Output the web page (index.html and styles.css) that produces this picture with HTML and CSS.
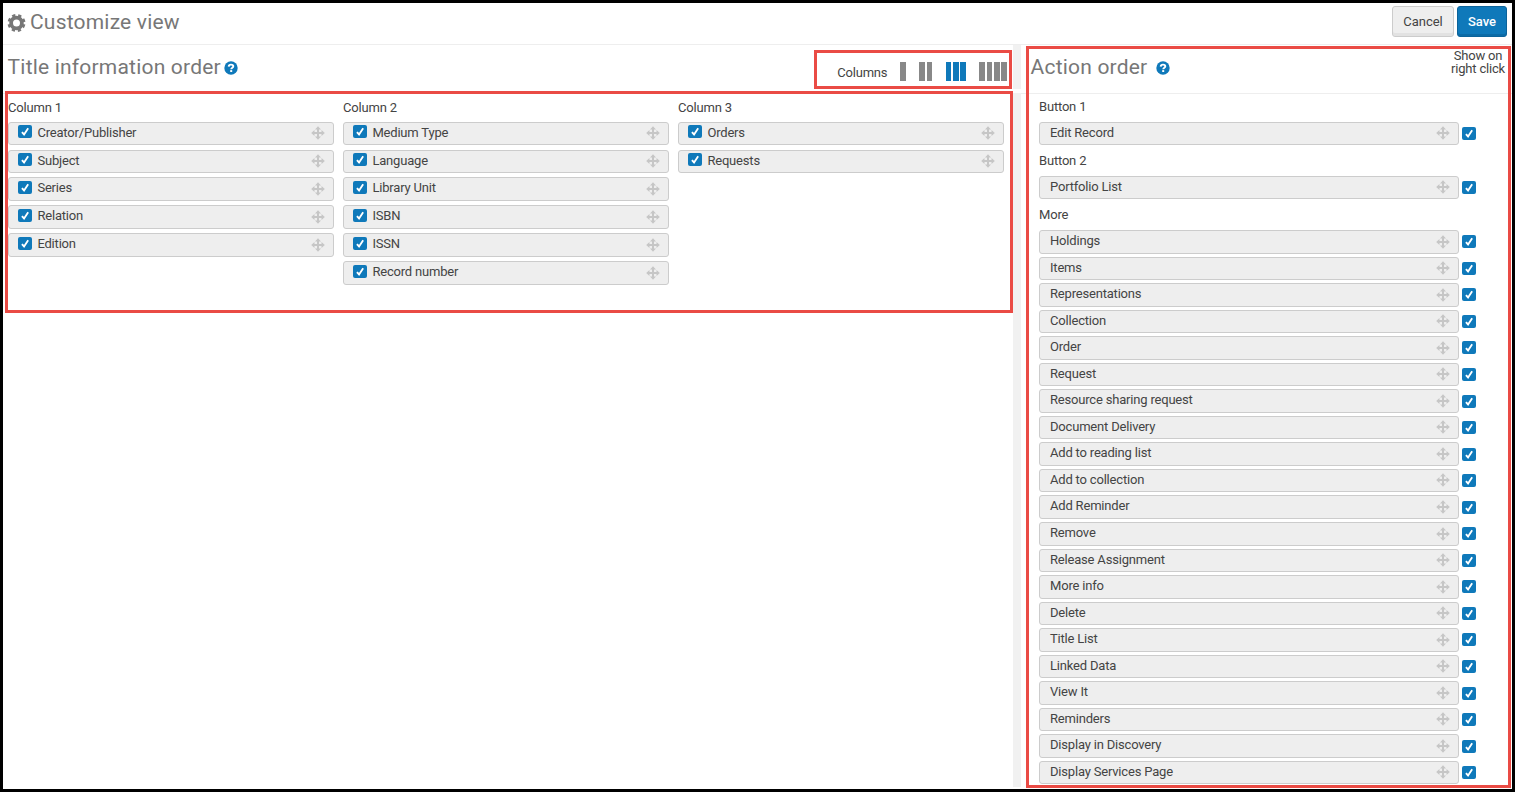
FILE: index.html
```html
<!DOCTYPE html>
<html lang="en">
<head>
    <meta charset="UTF-8">
    <meta name="viewport" content="width=device-width, initial-scale=1.0">
    <title>Customize view</title>
    <link rel="stylesheet" href="styles.css">
</head>
<body>
    <svg class="sprite">
        <symbol id="move" viewBox="0 0 14 14">
            <path d="M7 0.2 10 3.5H8V6H10.5V4L13.8 7 10.5 10V8H8V10.5H10L7 13.8 4 10.5H6V8H3.5V10L0.2 7 3.5 4V6H6V3.5H4Z"/>
        </symbol>
        <symbol id="help" viewBox="0 0 14 14">
            <circle cx="7" cy="7" r="6.7" fill="#0f79ba"/>
            <path d="M4.7 5.6C4.8 4.2 5.8 3.6 7 3.6 8.3 3.6 9.3 4.3 9.3 5.3 9.3 6.7 7.2 6.7 7.2 8.3" fill="none" stroke="#fff" stroke-width="1.9"/>
            <path d="M6.2 9.1H8.2V11H6.2Z" fill="#fff"/>
        </symbol>
        <symbol id="check" viewBox="0 0 14 14">
            <path d="M3.7 7.6 6 10.2 10.4 3.6" fill="none" stroke="#fff" stroke-width="2"/>
        </symbol>
    </svg>

    <div class="page">
        <header class="header">
            <h1 class="title">
                <svg class="gear" viewBox="0 0 18 18">
                    <circle cx="9" cy="9" r="5.4" stroke-width="3.8"/>
                    <circle cx="9" cy="9" r="7.6" stroke-width="2.8" stroke-dasharray="3.2 2.77" stroke-dashoffset="-1.4"/>
                </svg>
                Customize view
            </h1>
            <div class="buttons">
                <button class="button">Cancel</button>
                <button class="button primary">Save</button>
            </div>
        </header>

        <div class="panels">
            <section class="panel info">
                <div class="panel-head">
                    <h2 class="title">Title information order</h2>
                    <svg class="help"><use href="#help"/></svg>
                    <div class="picker">
                        <span class="picker-label">Columns</span>
                        <span class="bars"><i></i></span>
                        <span class="bars"><i></i><i></i></span>
                        <span class="bars active"><i></i><i></i><i></i></span>
                        <span class="bars"><i></i><i></i><i></i><i></i></span>
                    </div>
                </div>
                <div class="columns" id="columns"></div>
            </section>
            <div class="gutter"></div>
            <section class="panel actions">
                <div class="panel-head">
                    <h2 class="title">Action order</h2>
                    <svg class="help spaced"><use href="#help"/></svg>
                    <div class="show-on">Show on<br>right click</div>
                </div>
                <div class="groups" id="groups"></div>
            </section>
        </div>
    </div>

    <div class="highlight highlight-picker"></div>
    <div class="highlight highlight-columns"></div>
    <div class="highlight highlight-actions"></div>

    <script>
        const columns = {
            'Column 1': ['Creator/Publisher', 'Subject', 'Series', 'Relation', 'Edition'],
            'Column 2': ['Medium Type', 'Language', 'Library Unit', 'ISBN', 'ISSN', 'Record number'],
            'Column 3': ['Orders', 'Requests']
        };
        const actions = {
            'Button 1': ['Edit Record'],
            'Button 2': ['Portfolio List'],
            'More': ['Holdings', 'Items', 'Representations', 'Collection', 'Order', 'Request',
                'Resource sharing request', 'Document Delivery', 'Add to reading list',
                'Add to collection', 'Add Reminder', 'Remove', 'Release Assignment', 'More info',
                'Delete', 'Title List', 'Linked Data', 'View It', 'Reminders',
                'Display in Discovery', 'Display Services Page']
        };
        const check = '<svg class="check"><use href="#check"/></svg>';
        const move = '<svg class="move"><use href="#move"/></svg>';

        function render(id, groups, row) {
            document.getElementById(id).innerHTML = Object.keys(groups).map(name =>
                `<div class="group"><h3 class="group-name">${name}</h3>${groups[name].map(row).join('')}</div>`
            ).join('');
        }

        render('columns', columns, name =>
            `<div class="row"><div class="item">${check}<span class="name">${name}</span>${move}</div></div>`);
        render('groups', actions, name =>
            `<div class="row"><div class="item"><span class="name">${name}</span>${move}</div>${check}</div>`);
    </script>
</body>
</html>
```
FILE: styles.css
```css
* {
    box-sizing: border-box;
}
body {
    margin: 0;
    font-family: Roboto, sans-serif;
    font-size: 13px;
    letter-spacing: -0.19px;
    color: #444;
    background-color: #fff;
}
.sprite {
    display: none;
}
.page {
    display: flex;
    flex-direction: column;
    height: 792px;
    border: 3px solid #000;
    overflow: hidden;
}
.header {
    display: flex;
    justify-content: space-between;
    height: 42px;
    padding: 3px 5px 0 4px;
    border-bottom: 1px solid #eee;
}
.title {
    display: flex;
    margin: 0;
    font-size: 21px;
    font-weight: 400;
    line-height: 32px;
    letter-spacing: 0.2px;
    color: #777;
}
.gear {
    width: 19px;
    height: 18px;
    margin: 7.5px 4px 0 0;
    fill: none;
    stroke: #777;
}
.buttons {
    display: flex;
    gap: 3px;
}
.button {
    height: 31px;
    width: 62px;
    padding: 0;
    font: inherit;
    color: #444;
    background-color: #eee;
    border: 1px solid #ccc;
    border-radius: 3px;
    box-shadow: inset 0 -3px 0 #e2e2e2;
}
.primary {
    width: 50px;
    font-weight: 500;
    color: #fff;
    background-color: #0f79ba;
    border-color: #0c639a;
    box-shadow: inset 0 -2px 0 #0c6ba6;
}
.panels {
    display: flex;
    flex: 1;
    min-height: 0;
}
.info {
    width: 1010px;
}
.actions {
    flex: 1;
}
.gutter {
    width: 8px;
    height: 742px;
    background: linear-gradient(#f1f1f1 44px, #fff 44px, #fff 48px, #f1f1f1 48px);
}
.panel-head {
    display: flex;
    height: 49px;
    border-bottom: 1px solid #eee;
    padding: 6px 5px 0 4.6px;
}
.actions .panel-head {
    padding-left: 9.6px;
}
.help {
    width: 14px;
    height: 14px;
    margin: 9.5px 0 0 3px;
}
.spaced {
    margin: 10px 0 0 8.5px;
}
.picker {
    display: flex;
    margin: 11px 0 0 auto;
}
.picker-label {
    width: 63px;
    line-height: 22px;
}
.bars {
    display: flex;
    gap: 1.6px;
    height: 19px;
    margin-right: 13.4px;
}
.bars:last-child {
    margin-right: 1.2px;
}
.bars i {
    width: 5.7px;
    background-color: #888;
}
.bars.active i {
    background-color: #0f79ba;
}
.show-on {
    width: 60px;
    margin: -2px -1px 0 auto;
    line-height: 13px;
    text-align: center;
}
.columns {
    display: flex;
    gap: 9px;
    padding-left: 5px;
}
.columns .group {
    width: 326px;
}
.group-name {
    margin: 0;
    font-size: 13px;
    font-weight: 400;
    line-height: 27.8px;
}
.row {
    display: flex;
    align-items: center;
    height: 23.5px;
    margin-bottom: 3.05px;
}
.columns .row {
    margin-bottom: 4.35px;
}
.item {
    display: flex;
    flex: 1;
    height: 100%;
    padding: 0 8px 0 10px;
    background-color: #eee;
    border: 1px solid #ccc;
    border-radius: 3px;
}
.columns .item {
    padding-left: 9.4px;
}
.name {
    flex: 1;
    line-height: 20px;
}
.columns .name {
    line-height: 20.6px;
}
.move {
    width: 14px;
    height: 14px;
    margin-top: 3.5px;
    fill: #c6c6c6;
}
.check {
    width: 14px;
    height: 13px;
    background-color: #0f79ba;
    border-radius: 2px;
}
.item .check {
    margin: 2.5px 5px 0 0;
}
.groups {
    padding: 0 36px 0 18px;
}
.groups .item {
    margin-right: 3px;
}
.groups .group-name {
    line-height: 26px;
    margin-bottom: 1.65px;
}
.highlight {
    position: absolute;
    border: 3px solid #ea4b45;
}
.highlight-picker {
    left: 814px;
    top: 50px;
    width: 198px;
    height: 39px;
}
.highlight-columns {
    left: 5px;
    top: 91px;
    width: 1008px;
    height: 222px;
}
.highlight-actions {
    left: 1026px;
    top: 46px;
    width: 485px;
    height: 742px;
}
```
